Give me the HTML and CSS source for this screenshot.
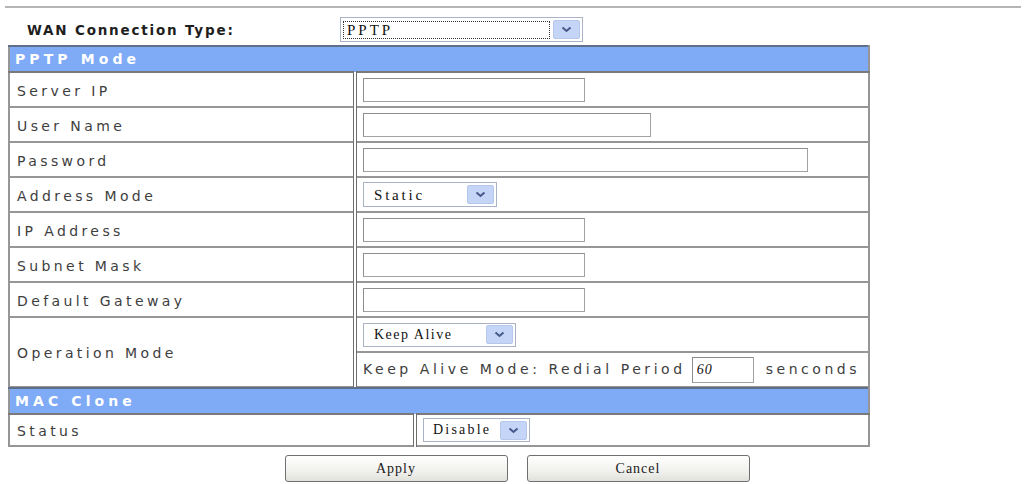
FILE: index.html
```html
<!DOCTYPE html>
<html>
<head>
<meta charset="utf-8">
<title>WAN PPTP</title>
<link rel="stylesheet" href="styles.css">
</head>
<body>
<div class="page">
  <div class="rule"></div>
  <div class="wan-row">
    <span class="wan-label">WAN Connection Type:</span>
    <div class="select sel-wan">
      <span class="sel-text focus">PPTP</span>
      <span class="sel-btn"><svg width="11" height="7" viewBox="0 0 11 7"><path d="M1.5 1.5 L5.5 5 L9.5 1.5" fill="none" stroke="#44598a" stroke-width="2"/></svg></span>
    </div>
  </div>

  <table class="form pptp">
    <tr class="head"><td colspan="2">PPTP Mode</td></tr>
    <tr><td class="lbl">Server IP</td><td class="val"><input class="inp w222" type="text"></td></tr>
    <tr><td class="lbl">User Name</td><td class="val"><input class="inp w288" type="text"></td></tr>
    <tr><td class="lbl">Password</td><td class="val"><input class="inp w445" type="text"></td></tr>
    <tr><td class="lbl">Address Mode</td><td class="val">
      <div class="select sel-static"><span class="sel-text">Static</span><span class="sel-btn"><svg width="11" height="7" viewBox="0 0 11 7"><path d="M1.5 1.5 L5.5 5 L9.5 1.5" fill="none" stroke="#44598a" stroke-width="2"/></svg></span></div>
    </td></tr>
    <tr><td class="lbl">IP Address</td><td class="val"><input class="inp w222" type="text"></td></tr>
    <tr><td class="lbl">Subnet Mask</td><td class="val"><input class="inp w222" type="text"></td></tr>
    <tr><td class="lbl">Default Gateway</td><td class="val"><input class="inp w222" type="text"></td></tr>
    <tr><td class="lbl" rowspan="2">Operation Mode</td><td class="val">
      <div class="select sel-keep"><span class="sel-text">Keep Alive</span><span class="sel-btn"><svg width="11" height="7" viewBox="0 0 11 7"><path d="M1.5 1.5 L5.5 5 L9.5 1.5" fill="none" stroke="#44598a" stroke-width="2"/></svg></span></div>
    </td></tr>
    <tr><td class="val txt">Keep Alive Mode: Redial Period <input class="inp w62 serif" type="text" value="60"> senconds</td></tr>
  </table>

  <table class="form mac">
    <tr class="head"><td colspan="2">MAC Clone</td></tr>
    <tr class="status"><td class="lbl">Status</td><td class="val">
      <div class="select sel-disable"><span class="sel-text">Disable</span><span class="sel-btn"><svg width="11" height="7" viewBox="0 0 11 7"><path d="M1.5 1.5 L5.5 5 L9.5 1.5" fill="none" stroke="#44598a" stroke-width="2"/></svg></span></div>
    </td></tr>
  </table>

  <div class="buttons">
    <button class="btn">Apply</button>
    <button class="btn">Cancel</button>
  </div>
</div>
</body>
</html>
```

FILE: styles.css
```css
html, body {
  margin: 0;
  padding: 0;
  background: #ffffff;
}
body {
  font-family: "DejaVu Sans", "Liberation Sans", sans-serif;
  color: #3b3b3b;
}
.page {
  padding: 6px 3px 0 5px;
}
.rule {
  border-top: 2px solid #b4b4b4;
}
.wan-row {
  display: flex;
  align-items: center;
  box-sizing: border-box;
  height: 37px;
  padding-top: 6px;
  padding-left: 22px;
}
.wan-label {
  width: 313px;
  font-weight: bold;
  font-size: 13.5px;
  letter-spacing: 1.8px;
  color: #1e1e1e;
}

/* fake select */
.select {
  display: flex;
  align-items: center;
  box-sizing: border-box;
  border: 1px solid #a9b3c5;
  background: #fff;
  padding: 2px;
  font-family: "Liberation Serif", serif;
  font-size: 14px;
  color: #111;
}
.sel-text {
  flex: 1;
  padding-left: 8px;
  letter-spacing: 1.5px;
  line-height: 18px;
}
.sel-text.focus {
  outline: 1px dotted #333;
  outline-offset: -1px;
  padding-left: 4px;
  font-size: 15px;
  letter-spacing: 3px;
}
.sel-static .sel-text {
  font-size: 15px;
  letter-spacing: 2.8px;
}
.sel-disable .sel-text {
  letter-spacing: 2.2px;
  padding-left: 7px;
}
.sel-btn {
  display: flex;
  align-items: center;
  justify-content: center;
  width: 27px;
  height: 19px;
  margin-left: 3px;
  background: #c5d5f7;
  border: 1px solid #b6c7ec;
  border-radius: 2px;
  box-sizing: border-box;
}
.sel-wan {
  width: 243px;
  height: 25px;
}
.sel-static {
  width: 134px;
  height: 25px;
}
.sel-keep {
  width: 153px;
  height: 24px;
}
.sel-disable {
  width: 107px;
  height: 24px;
}

/* tables */
.form {
  width: 862px;
  margin-left: 3px;
  border-collapse: collapse;
  border: 2px solid #8c8c8c;
}
.form td {
  padding: 0;
  border: 2px solid #969696;
}
.form .head td {
  height: 24px;
  background: #7eaaf6;
  border-top: 2px solid #5f6f88;
  border-bottom: 2px solid #7a7a7a;
  color: #ffffff;
  font-weight: bold;
  font-size: 14px;
  letter-spacing: 4.1px;
  padding-left: 5px;
}
.form .lbl {
  height: 31px;
  width: 336px;
  padding-left: 7px;
  padding-top: 2px;
  font-size: 14px;
  letter-spacing: 3.4px;
  color: #3e3e3e;
}
.form .val {
  height: 33px;
  padding-left: 6px;
  border-left: 4px double #6e6e6e;
}
.form .txt {
  font-size: 14px;
  letter-spacing: 3.55px;
  color: #3e3e3e;
}
.mac {
  margin-top: -1px;
}
.mac .lbl {
  width: 396px;
}
.mac .status .lbl {
  height: 28px;
}
.mac .status .val {
  height: 30px;
}

/* inputs */
.inp {
  box-sizing: border-box;
  height: 24px;
  margin: 0;
  border: 1px solid #a2a2a2;
  border-top-color: #8d8d8d;
  border-left-color: #8d8d8d;
  background: #fff;
  vertical-align: middle;
  padding: 0 4px;
}
.w222 { width: 222px; }
.w288 { width: 288px; }
.w445 { width: 445px; }
.w62 {
  width: 62px;
  height: 26px;
  margin: 0 4px 0 -2px;
}
.serif {
  font-family: "Liberation Serif", serif;
  font-style: italic;
  font-size: 14px;
  letter-spacing: 1px;
  color: #111;
}

/* buttons */
.buttons {
  display: flex;
  justify-content: center;
  gap: 19px;
  padding-top: 8px;
  padding-left: 8px;
}
.btn {
  width: 223px;
  height: 27px;
  border: 1px solid #6f6f6f;
  border-radius: 3px;
  background: linear-gradient(#ffffff, #f1f1ee 60%, #e2e2dc);
  font-family: "Liberation Serif", serif;
  font-size: 14px;
  letter-spacing: 1px;
  color: #1a1a1a;
  padding: 0;
}
```
